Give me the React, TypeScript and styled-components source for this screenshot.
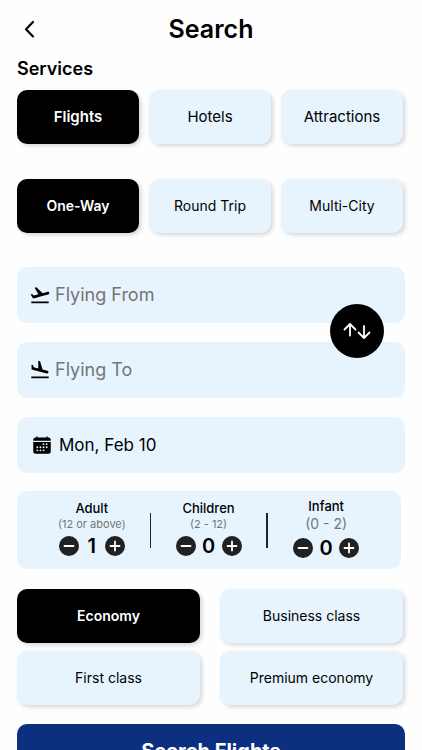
import React, { useState } from "react";
import styled, { createGlobalStyle, css } from "styled-components";
import { MdFlightLand, MdFlightTakeoff } from "react-icons/md";
import { IoCalendar } from "react-icons/io5";

const GlobalStyle = createGlobalStyle`
  * {
    box-sizing: border-box;
  }
  html {
    scrollbar-width: none;
  }
  body {
    margin: 0;
    background: #fefefe;
    color: #000;
    font-family: Inter, "Open Sans", sans-serif;
  }
  button,
  input {
    font-family: inherit;
    color: inherit;
  }
`;

const tint = "#e7f4fe";

const Page = styled.main`
  display: flex;
  flex-direction: column;
  padding: 0 17px 24px;
`;

const Header = styled.header`
  display: grid;
  grid-template-columns: 24px 1fr 24px;
  align-items: center;
  height: 58px;
`;

const BackButton = styled.button`
  display: flex;
  align-items: center;
  justify-content: center;
  width: 24px;
  height: 24px;
  padding: 0;
  border: 0;
  background: none;
  cursor: pointer;
`;

const Title = styled.h1`
  margin: 0;
  font-size: 25px;
  line-height: 32px;
  font-weight: 600;
  text-align: center;
`;

const SectionTitle = styled.h2`
  margin: 0 0 10px;
  font-size: 18px;
  line-height: 22px;
  font-weight: 600;
`;

const OptionGrid = styled.div<{ $columns: number; $after: number }>`
  display: grid;
  grid-template-columns: repeat(${(p) => p.$columns}, 1fr);
  gap: 8px ${(p) => (p.$columns === 2 ? 20 : 10)}px;
  padding-right: 2px;
  margin-bottom: ${(p) => p.$after}px;
`;

const Option = styled.button<{ $large?: boolean }>`
  height: 54px;
  padding: 0;
  border: 0;
  border-radius: 10px;
  background: ${tint};
  box-shadow: 2px 2px 4px rgba(0, 0, 0, 0.16);
  font-size: ${(p) => (p.$large ? 15 : 14)}px;
  line-height: 20px;
  white-space: nowrap;
  cursor: pointer;

  &[aria-pressed="true"] {
    background: #000;
    color: #fff;
    font-weight: 600;
  }
`;

const panel = css`
  border-radius: 10px;
  background: ${tint};
`;

const Route = styled.div`
  position: relative;
  display: flex;
  flex-direction: column;
  gap: 19px;
  margin-bottom: 19px;
`;

const Field = styled.label<{ $date?: boolean }>`
  ${panel}
  display: flex;
  align-items: center;
  gap: ${(p) => (p.$date ? 7 : 4)}px;
  height: 56px;
  padding: 0 ${(p) => (p.$date ? 15 : 12)}px;

  svg {
    flex: none;
  }
`;

const TextInput = styled.input<{ $date?: boolean }>`
  flex: 1;
  min-width: 0;
  padding: 0;
  border: 0;
  outline: 0;
  background: none;
  font-size: ${(p) => (p.$date ? 17 : 18)}px;
  line-height: 24px;

  &::placeholder {
    color: #757575;
    opacity: 1;
  }
`;

const SwapButton = styled.button`
  position: absolute;
  top: 37px;
  right: 21px;
  display: flex;
  align-items: center;
  justify-content: center;
  width: 54px;
  height: 54px;
  padding: 0;
  border: 0;
  border-radius: 50%;
  background: #000;
  color: #fff;
  cursor: pointer;
`;

const Travellers = styled.section`
  ${panel}
  display: flex;
  align-items: center;
  margin: 18px 4px 20px 0;
  padding: 8px 17px;
  height: 78px;
`;

const Divider = styled.span<{ $width: number }>`
  width: ${(p) => p.$width}px;
  height: 35px;
  background: #222;
`;

const Traveller = styled.div`
  flex: 1;
  display: flex;
  flex-direction: column;
  align-items: center;
`;

const TravellerName = styled.span`
  font-size: 13px;
  line-height: 18px;
  font-weight: 500;
`;

const TravellerAges = styled.span<{ $large: boolean }>`
  font-size: ${(p) => (p.$large ? 14 : 11)}px;
  line-height: ${(p) => (p.$large ? 18 : 14)}px;
  color: #757575;
`;

const Stepper = styled.div`
  display: flex;
  align-items: center;
  height: 30px;
`;

const StepButton = styled.button`
  display: flex;
  width: 20px;
  height: 20px;
  padding: 0;
  border: 0;
  border-radius: 50%;
  background: #212121;
  cursor: pointer;
`;

const Count = styled.output`
  width: 26px;
  font-size: 20px;
  line-height: 24px;
  font-weight: 600;
  text-align: center;
`;

const SubmitButton = styled.button`
  height: 54px;
  border: 0;
  border-radius: 10px;
  background: #0c2f80;
  color: #fff;
  font-size: 20px;
  line-height: 26px;
  font-weight: 700;
  cursor: pointer;
`;

const ChevronIcon = () => (
  <svg width="24" height="24" viewBox="0 0 24 24" fill="none" stroke="#000" strokeWidth="2.2" strokeLinecap="round" strokeLinejoin="round" aria-hidden="true">
    <path d="M16 5L9 12.2L16 19.4" />
  </svg>
);

const SwapIcon = () => (
  <svg width="30" height="18" viewBox="0 0 30 18" fill="none" stroke="currentColor" strokeWidth="1.8" strokeLinecap="round" strokeLinejoin="round" aria-hidden="true">
    <path d="M8 13.5V2.2M2.5 7.5L8 2L13.5 7.5" />
    <path d="M22 4V15.5M16.5 10.5L22 16L27.5 10.5" />
  </svg>
);

const StepIcon = ({ plus }: { plus?: boolean }) => (
  <svg width="20" height="20" viewBox="0 0 20 20" fill="none" stroke="#fff" strokeWidth="1.8" strokeLinecap="round" aria-hidden="true">
    <path d={plus ? "M5.5 10H14.5M10 5.5V14.5" : "M5.5 10H14.5"} />
  </svg>
);

interface OptionsProps {
  label: string;
  items: string[];
  columns: number;
  after: number;
  large?: boolean;
}

function Options({ label, items, columns, after, large }: OptionsProps) {
  const [selected, setSelected] = useState(items[0]);
  return (
    <OptionGrid role="group" aria-label={label} $columns={columns} $after={after}>
      {items.map((item) => (
        <Option key={item} type="button" $large={large} aria-pressed={item === selected} onClick={() => setSelected(item)}>
          {item}
        </Option>
      ))}
    </OptionGrid>
  );
}

interface CounterProps {
  name: string;
  ages: string;
  initial: number;
  large?: boolean;
}

function Counter({ name, ages, initial, large = false }: CounterProps) {
  const [count, setCount] = useState(initial);
  return (
    <Traveller role="group" aria-label={name}>
      <TravellerName>{name}</TravellerName>
      <TravellerAges $large={large}>{ages}</TravellerAges>
      <Stepper>
        <StepButton type="button" aria-label={`Fewer: ${name}`} onClick={() => setCount(Math.max(0, count - 1))}>
          <StepIcon />
        </StepButton>
        <Count>{count}</Count>
        <StepButton type="button" aria-label={`More: ${name}`} onClick={() => setCount(count + 1)}>
          <StepIcon plus />
        </StepButton>
      </Stepper>
    </Traveller>
  );
}

export default function App() {
  const [from, setFrom] = useState("");
  const [to, setTo] = useState("");
  const [date, setDate] = useState("Mon, Feb 10");

  const swap = () => {
    setFrom(to);
    setTo(from);
  };

  return (
    <>
      <GlobalStyle />
      <Page>
        <Header>
          <BackButton type="button" aria-label="Back">
            <ChevronIcon />
          </BackButton>
          <Title>Search</Title>
        </Header>

        <SectionTitle>Services</SectionTitle>
        <Options label="Services" items={["Flights", "Hotels", "Attractions"]} columns={3} after={35} large />
        <Options label="Trip type" items={["One-Way", "Round Trip", "Multi-City"]} columns={3} after={34} />

        <Route>
          <Field>
            <MdFlightTakeoff size={22} aria-hidden="true" />
            <TextInput aria-label="Flying From" placeholder="Flying From" value={from} onChange={(e) => setFrom(e.target.value)} />
          </Field>
          <Field>
            <MdFlightLand size={22} aria-hidden="true" />
            <TextInput aria-label="Flying To" placeholder="Flying To" value={to} onChange={(e) => setTo(e.target.value)} />
          </Field>
          <SwapButton type="button" aria-label="Swap origin and destination" onClick={swap}>
            <SwapIcon />
          </SwapButton>
        </Route>

        <Field $date>
          <IoCalendar size={20} aria-hidden="true" />
          <TextInput $date aria-label="Departure date" value={date} onChange={(e) => setDate(e.target.value)} />
        </Field>

        <Travellers aria-label="Travellers">
          <Counter name="Adult" ages="(12 or above)" initial={1} />
          <Divider $width={1} />
          <Counter name="Children" ages="(2 - 12)" initial={0} />
          <Divider $width={2} />
          <Counter name="Infant" ages="(0 - 2)" initial={0} large />
        </Travellers>

        <Options label="Cabin class" items={["Economy", "Business class", "First class", "Premium economy"]} columns={2} after={19} />

        <SubmitButton type="button">Search Flights</SubmitButton>
      </Page>
    </>
  );
}
